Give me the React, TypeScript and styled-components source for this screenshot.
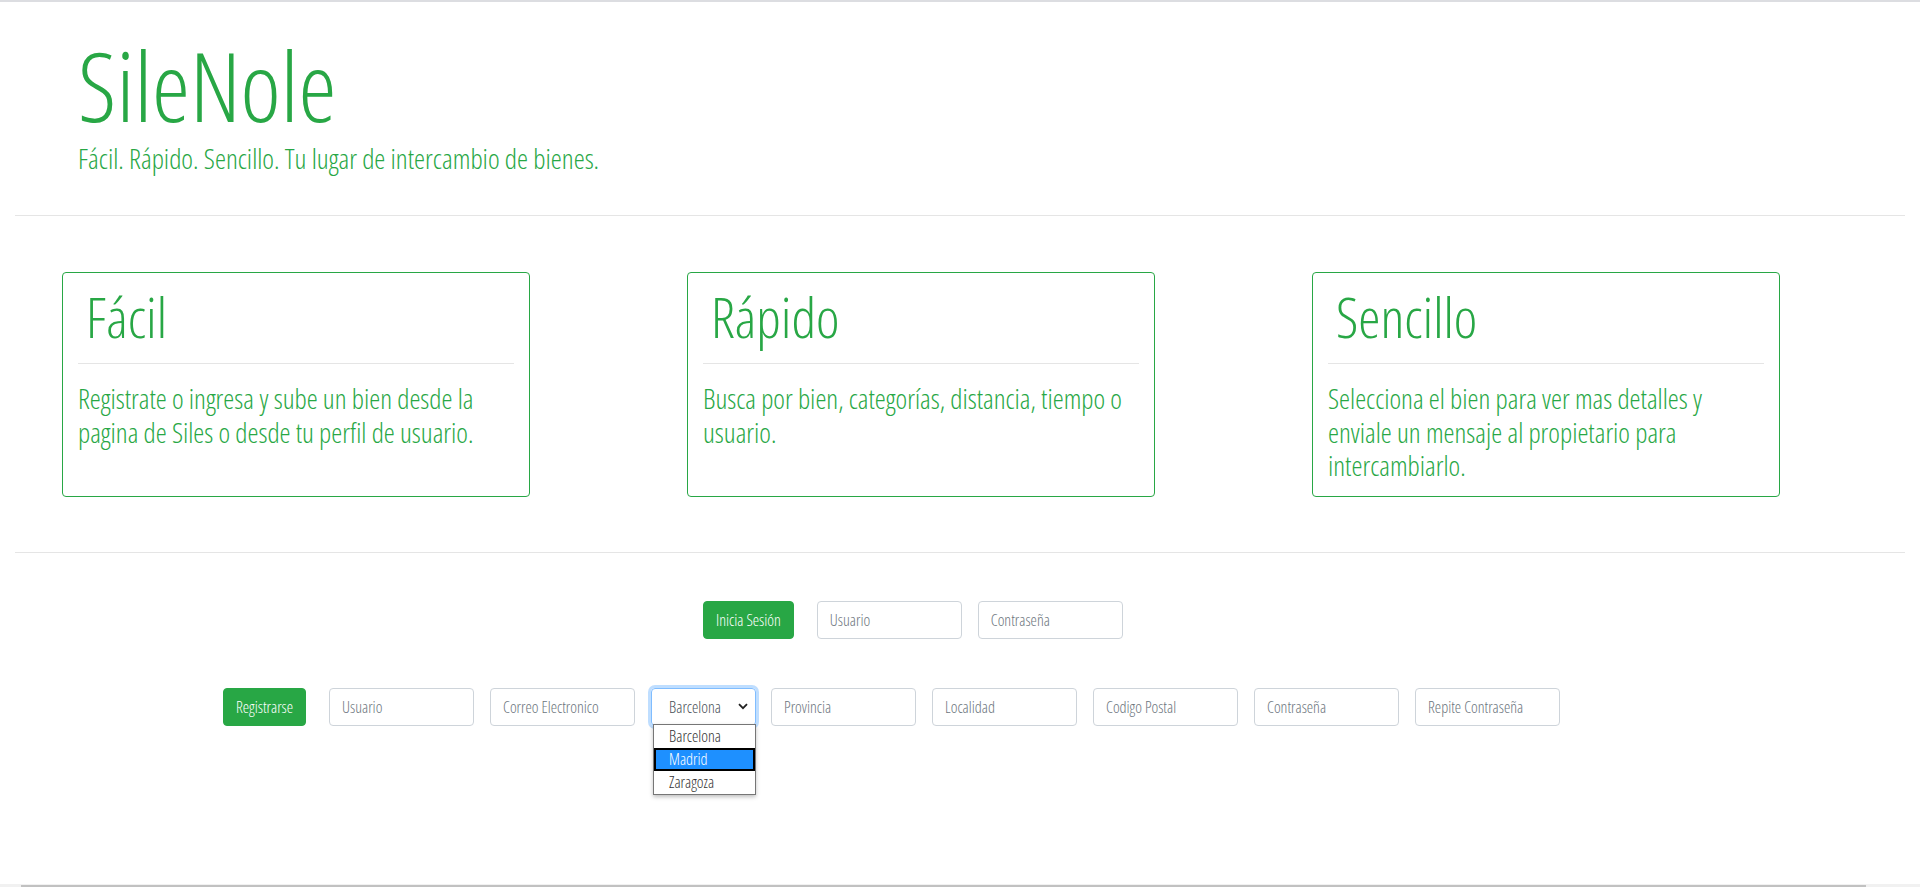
import React from "react";
import styled, { createGlobalStyle } from "styled-components";

const GlobalStyle = createGlobalStyle`
  html, body { margin: 0; padding: 0; background: #fff; }
  body {
    font-family: "Open Sans", "Liberation Sans", sans-serif;
    font-stretch: 75%;
    font-weight: 300;
    color: #212529;
    overflow: hidden;
  }
  * { box-sizing: border-box; }
`;

const Page = styled.div`
  height: 100vh;
  display: flex;
  flex-direction: column;
  border-top: 2px solid #dcdde1;
`;

const Main = styled.main`
  flex: 1;
  padding: 0 15px;
`;

const Header = styled.header`
  padding: 25px 0 41px 63px;
`;

const Title = styled.h1`
  margin: 0;
  font-size: 96px;
  font-weight: 300;
  line-height: 1.2;
  color: #28a745;
`;

const Lead = styled.p`
  margin: 0;
  font-size: 27.9px;
  line-height: 32px;
  color: #28a745;
`;

const Rule = styled.hr`
  margin: 0;
  border: 0;
  border-top: 1px solid #e5e5e5;
`;

const Cards = styled.section`
  display: grid;
  grid-template-columns: repeat(3, 468px);
  column-gap: 157px;
  padding: 56px 0 55px 47px;
`;

const Card = styled.article`
  border: 1px solid #28a745;
  border-radius: 4px;
  padding: 10px 15px 13px;
  color: #28a745;
`;

const CardTitle = styled.h2`
  margin: 0 0 13px;
  padding-left: 8px;
  font-size: 56px;
  font-weight: 300;
  line-height: 1.2;
`;

const CardRule = styled.hr`
  margin: 0 0 18px;
  border: 0;
  border-top: 1px solid #e5e5e5;
`;

const CardText = styled.p`
  margin: 0;
  font-size: 27.8px;
  line-height: 33.5px;
`;

const FormRow = styled.form<{ $left: number; $top: number }>`
  display: flex;
  align-items: center;
  padding-left: ${(p) => p.$left}px;
  margin-top: ${(p) => p.$top}px;
`;

const Button = styled.button`
  height: 38px;
  padding: 0 12px;
  margin-right: 23px;
  border: 1px solid #28a745;
  border-radius: 4px;
  background: #28a745;
  color: #fff;
  font-family: inherit;
  font-stretch: 75%;
  font-weight: 300;
  font-size: 16px;
  line-height: 1.5;
`;

const Input = styled.input`
  width: 145px;
  height: 38px;
  margin-right: 16px;
  padding: 6px 12px;
  border: 1px solid #ced4da;
  border-radius: 4px;
  font-family: inherit;
  font-stretch: 75%;
  font-weight: 300;
  font-size: 16px;
  color: #495057;
  &::placeholder { color: #6c757d; opacity: 1; }
`;

const SelectWrap = styled.div`
  position: relative;
  margin-right: 15px;
`;

const SelectBox = styled.div`
  width: 105px;
  height: 38px;
  display: flex;
  align-items: center;
  justify-content: space-between;
  padding: 0 7px 0 17px;
  border: 1px solid #80bdff;
  border-radius: 4px;
  box-shadow: 0 0 0 3px rgba(0, 123, 255, 0.25);
  font-size: 16px;
  font-weight: 300;
  color: #495057;
`;

const OptionList = styled.ul`
  position: absolute;
  top: 36px;
  left: 2px;
  width: 103px;
  margin: 0;
  padding: 0;
  list-style: none;
  background: #fff;
  border: 1px solid #767676;
  box-shadow: 0 2px 4px rgba(0, 0, 0, 0.25);
  font-size: 16px;
  font-weight: 300;
`;

const Option = styled.li<{ $active?: boolean }>`
  height: 23px;
  line-height: 21px;
  padding: 0 0 0 14px;
  color: ${(p) => (p.$active ? "#fff" : "#333")};
  background: ${(p) => (p.$active ? "#1e90ff" : "#fff")};
  border: 1px solid ${(p) => (p.$active ? "#000" : "transparent")};
  outline: ${(p) => (p.$active ? "1px solid #000" : "none")};
  outline-offset: -2px;
`;

const Footer = styled.footer`
  height: 3px;
  background: #f1f1f1;
  padding: 1px 54px 0 21px;
  display: flex;
`;

const Thumb = styled.div`
  flex: 1;
  background: #c1c1c1;
`;

const cards = [
  {
    title: "Fácil",
    text: "Registrate o ingresa y sube un bien desde la pagina de Siles o desde tu perfil de usuario.",
  },
  {
    title: "Rápido",
    text: "Busca por bien, categorías, distancia, tiempo o usuario.",
  },
  {
    title: "Sencillo",
    text: "Selecciona el bien para ver mas detalles y enviale un mensaje al propietario para intercambiarlo.",
  },
];

const Chevron = () => (
  <svg width="10" height="7" viewBox="0 0 10 7" aria-hidden>
    <path d="M1 1.2 L5 5.2 L9 1.2" fill="none" stroke="#222" strokeWidth="1.8" />
  </svg>
);

export default function App() {
  return (
    <>
      <GlobalStyle />
      <Page>
        <Main>
          <Header>
            <Title>SileNole</Title>
            <Lead>Fácil. Rápido. Sencillo. Tu lugar de intercambio de bienes.</Lead>
          </Header>
          <Rule />
          <Cards>
            {cards.map((c) => (
              <Card key={c.title}>
                <CardTitle>{c.title}</CardTitle>
                <CardRule />
                <CardText>{c.text}</CardText>
              </Card>
            ))}
          </Cards>
          <Rule />
          <FormRow $left={688} $top={48} onSubmit={(e) => e.preventDefault()}>
            <Button type="button">Inicia Sesión</Button>
            <Input placeholder="Usuario" />
            <Input placeholder="Contraseña" type="password" />
          </FormRow>
          <FormRow $left={208} $top={49} onSubmit={(e) => e.preventDefault()}>
            <Button type="button">Registrarse</Button>
            <Input placeholder="Usuario" />
            <Input placeholder="Correo Electronico" />
            <SelectWrap>
              <SelectBox>
                <span>Barcelona</span>
                <Chevron />
              </SelectBox>
              <OptionList>
                <Option>Barcelona</Option>
                <Option $active>Madrid</Option>
                <Option>Zaragoza</Option>
              </OptionList>
            </SelectWrap>
            <Input placeholder="Provincia" />
            <Input placeholder="Localidad" />
            <Input placeholder="Codigo Postal" />
            <Input placeholder="Contraseña" type="password" />
            <Input placeholder="Repite Contraseña" type="password" />
          </FormRow>
        </Main>
        <Footer>
          <Thumb />
        </Footer>
      </Page>
    </>
  );
}
